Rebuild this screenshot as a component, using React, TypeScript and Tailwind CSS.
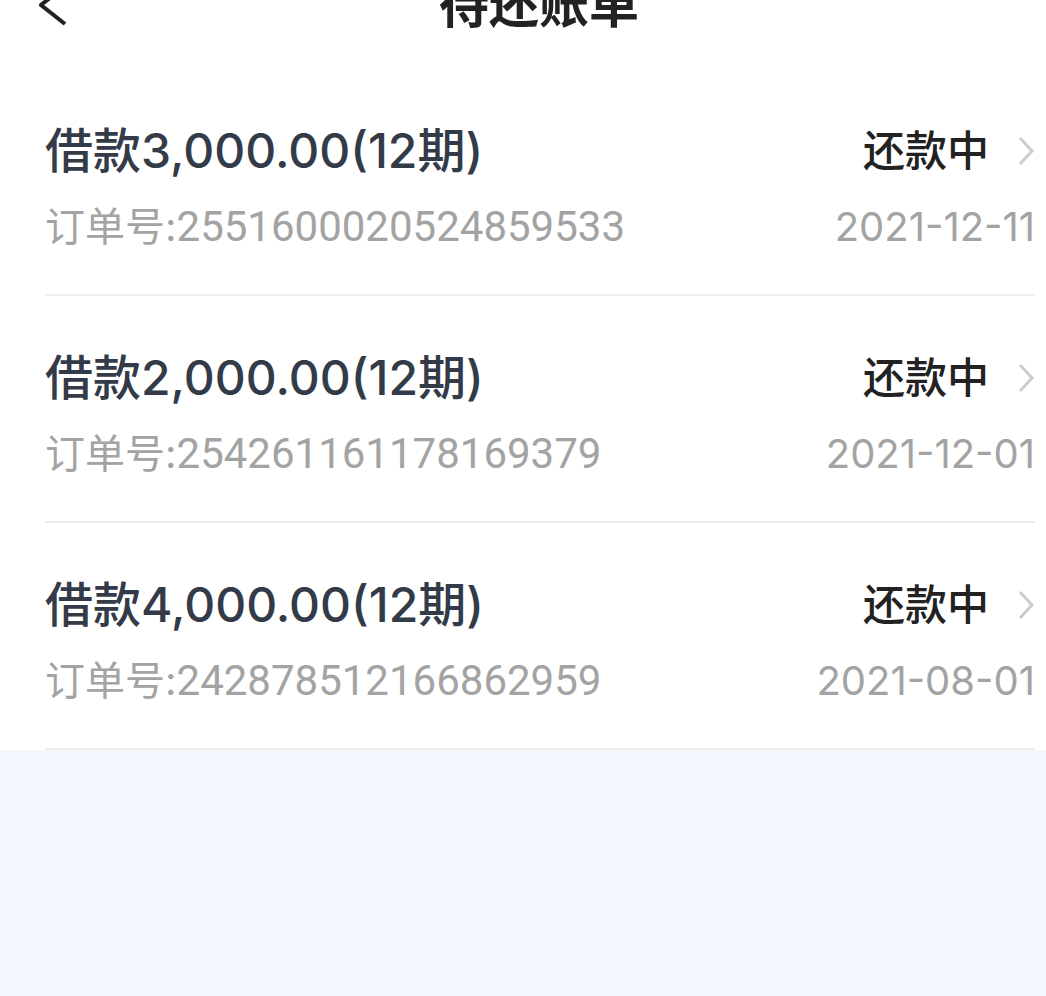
import React from 'react';

interface Bill {
  amount: string;
  periods: number;
  orderNo: string;
  date: string;
  status: string;
}

const bills: Bill[] = [
  { amount: '3,000.00', periods: 12, orderNo: '2551600020524859533', date: '2021-12-11', status: '还款中' },
  { amount: '2,000.00', periods: 12, orderNo: '254261161178169379', date: '2021-12-01', status: '还款中' },
  { amount: '4,000.00', periods: 12, orderNo: '242878512166862959', date: '2021-08-01', status: '还款中' },
];

const font = "font-['Inter','Noto_Sans_CJK_SC',sans-serif]";

const BillRow: React.FC<{ bill: Bill }> = ({ bill }) => (
  <div className="ml-[45px] mr-[11px] pt-[54px] pb-[39px] border-b-2 border-[#ececec]">
    <div className="flex items-center justify-between h-[56px]">
      <span className="text-[48px] font-medium text-[#343b48] leading-none">
        借款{bill.amount}({bill.periods}期)
      </span>
      <div className="flex items-center gap-[28px]">
        <span className="text-[42px] font-medium text-[#222222] leading-none">{bill.status}</span>
        <svg width="18" height="30" viewBox="0 0 18 30" fill="none">
          <path d="M3 2 L15 15 L3 28" stroke="#cccccc" strokeWidth="3" />
        </svg>
      </div>
    </div>
    <div className="mt-[20px] flex items-center justify-between h-[56px] text-[40px] text-[#a3a3a3] leading-none">
      <span>
        订单号:<span className="font-['Roboto',sans-serif] text-[42px]">{bill.orderNo}</span>
      </span>
      <span>{bill.date}</span>
    </div>
  </div>
);

export default function App() {
  return (
    <div className={`min-h-screen bg-[#f3f6fd] ${font}`}>
      <div className="bg-white">
        <header className="h-[69px] overflow-hidden">
          <div className="-mt-[19px] h-[48px] flex items-center">
            <svg className="ml-[39px] shrink-0" width="28" height="44" viewBox="0 0 28 44" fill="none">
              <path d="M26 3 L2 22 L26 41" stroke="#222222" strokeWidth="4" />
            </svg>
            <h1 className="flex-1 text-center pr-[35px] text-[50px] font-semibold text-[#222222] leading-none">
              待还账单
            </h1>
          </div>
        </header>
        {bills.map((b) => (
          <BillRow key={b.orderNo} bill={b} />
        ))}
      </div>
    </div>
  );
}
